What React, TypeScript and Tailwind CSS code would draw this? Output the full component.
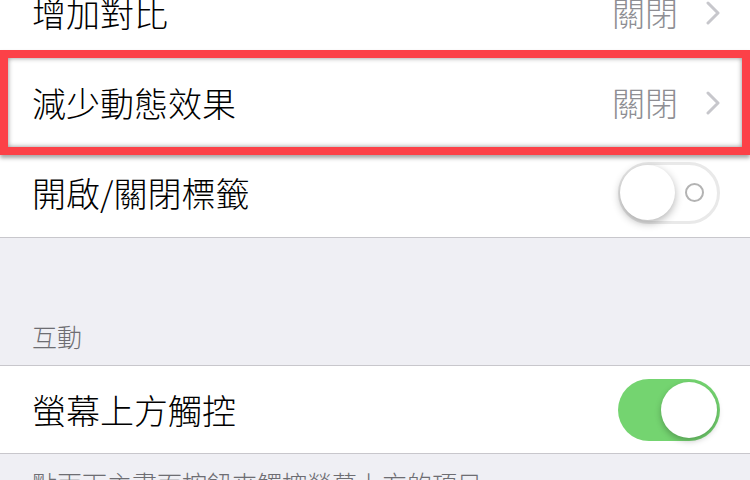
const font = "font-['Noto_Sans_CJK_TC','Noto_Sans',sans-serif] font-light"

function Chevron() {
  return (
    <svg width="14" height="24" viewBox="0 0 14 24" fill="none">
      <path d="M2 2L12 12L2 22" stroke="#c7c7cc" strokeWidth="3" strokeLinecap="round" strokeLinejoin="round" />
    </svg>
  )
}

function ValueRow({ label, value, inset = true }: { label: string; value: string; inset?: boolean }) {
  return (
    <div className="h-[90px] bg-white pl-[32px] flex">
      <div className={`flex-1 flex items-center pr-[30px] ${inset ? 'border-b border-[#c8c7cc]' : ''}`}>
        <span className="text-[34px] leading-none text-black flex-1">{label}</span>
        <span className="text-[33px] leading-none text-[#8e8e93] mr-[28px]">{value}</span>
        <Chevron />
      </div>
    </div>
  )
}

function Switch({ on }: { on: boolean }) {
  if (on) {
    return (
      <div className="w-[102px] h-[62px] rounded-full bg-[#74d470] flex items-center justify-end pr-[3px]">
        <div className="w-[56px] h-[56px] rounded-full bg-white shadow-[0_3px_6px_rgba(0,0,0,0.25)]" />
      </div>
    )
  }
  return (
    <div className="w-[102px] h-[62px] rounded-full bg-white border-[3px] border-[#e9e9e9] flex items-center relative">
      <div className="w-[55px] h-[55px] rounded-full bg-white shadow-[0_3px_8px_rgba(0,0,0,0.3)] -ml-[1px]" />
      <div className="ml-[10px] w-[19px] h-[19px] rounded-full border-2 border-[#b3b3b3]" />
    </div>
  )
}

export default function App() {
  return (
    <div className={`w-[750px] h-[480px] overflow-hidden bg-[#efeff4] relative ${font}`}>
      <div className="-mt-[32px]">
        {/* 視覺 section */}
        <ValueRow label="增加對比" value="關閉" />
        <ValueRow label="減少動態效果" value="關閉" />
        <div className="h-[90px] bg-white pl-[32px] pr-[30px] flex items-center border-b border-[#c8c7cc]">
          <span className="text-[34px] leading-none text-black flex-1">開啟/關閉標籤</span>
          <Switch on={false} />
        </div>

        {/* 互動 section */}
        <div className="h-[127px] flex items-end pl-[32px] pb-[16px]">
          <span className="text-[25px] leading-none text-[#6d6d72]">互動</span>
        </div>
        <div className="h-[89px] bg-white pl-[32px] pr-[30px] flex items-center border-y border-[#c8c7cc]">
          <span className="text-[34px] leading-none text-black flex-1">螢幕上方觸控</span>
          <Switch on />
        </div>
        <div className="pl-[32px] pt-[17px]">
          <span className="text-[25px] leading-none text-[#6d6d72]">點兩下主畫面按鈕來觸控螢幕上方的項目</span>
        </div>
      </div>

      {/* highlight */}
      <div className="absolute left-0 top-[50px] w-[750px] h-[105px] border-[8px] border-[#fc4148] shadow-[0_3px_4px_rgba(0,0,0,0.35),inset_0_0_5px_rgba(0,0,0,0.45)]" />
    </div>
  )
}
